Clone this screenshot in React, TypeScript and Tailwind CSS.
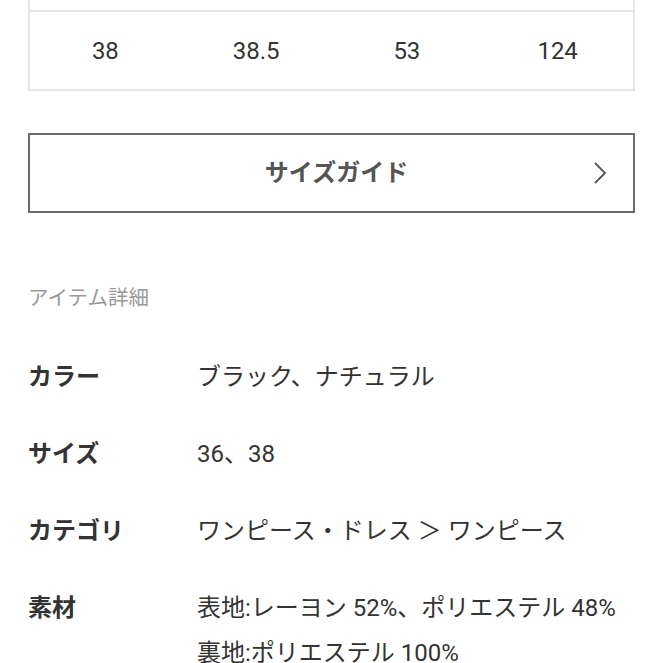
const SIZES = ["38", "38.5", "53", "124"];

const DETAILS: { label: string; values: string[] }[] = [
  { label: "カラー", values: ["ブラック、ナチュラル"] },
  { label: "サイズ", values: ["36、38"] },
  { label: "カテゴリ", values: ["ワンピース・ドレス ＞ ワンピース"] },
  { label: "素材", values: ["表地:レーヨン 52%、ポリエステル 48%", "裏地:ポリエステル 100%"] },
];

const App = () => {
  return (
    <div
      className="w-[663px] h-[663px] overflow-hidden bg-white text-[#333]"
      style={{ fontFamily: 'Roboto, "Noto Sans CJK JP", sans-serif' }}
    >
      <div className="px-[28px]">
        {/* Size table (scrolled) */}
        <div className="border-x-2 border-b-2 border-[#e6e6e6]">
          <div className="h-[12px] border-b-2 border-[#e6e6e6]" />
          <div className="grid grid-cols-4 h-[77px] items-center">
            {SIZES.map((s) => (
              <div key={s} className="text-center text-[24px]">
                {s}
              </div>
            ))}
          </div>
        </div>

        {/* Size guide button */}
        <div className="mt-[42px] h-[80px] border-2 border-[#6b6b6b] flex items-center">
          <div className="w-[60px]" />
          <div className="flex-1 text-center text-[24px] font-bold text-[#555] pl-[10px]">
            サイズガイド
          </div>
          <div className="w-[60px] flex justify-end pr-[26px]">
            <svg width="14" height="24" viewBox="0 0 14 24" fill="none">
              <path d="M2 2 L12 12 L2 22" stroke="#555" strokeWidth="1.8" />
            </svg>
          </div>
        </div>

        {/* Item details */}
        <h3 className="mt-[71px] text-[20.5px] leading-[28px] text-[#999]">アイテム詳細</h3>

        <dl className="mt-[43px] grid grid-cols-[169px_1fr] gap-y-[32px] text-[24px] leading-[45px]">
          {DETAILS.map((d) => (
            <div key={d.label} className="contents">
              <dt className="font-bold">{d.label}</dt>
              <dd>
                {d.values.map((v) => (
                  <div key={v}>{v}</div>
                ))}
              </dd>
            </div>
          ))}
        </dl>
      </div>
    </div>
  );
};

export default App;
